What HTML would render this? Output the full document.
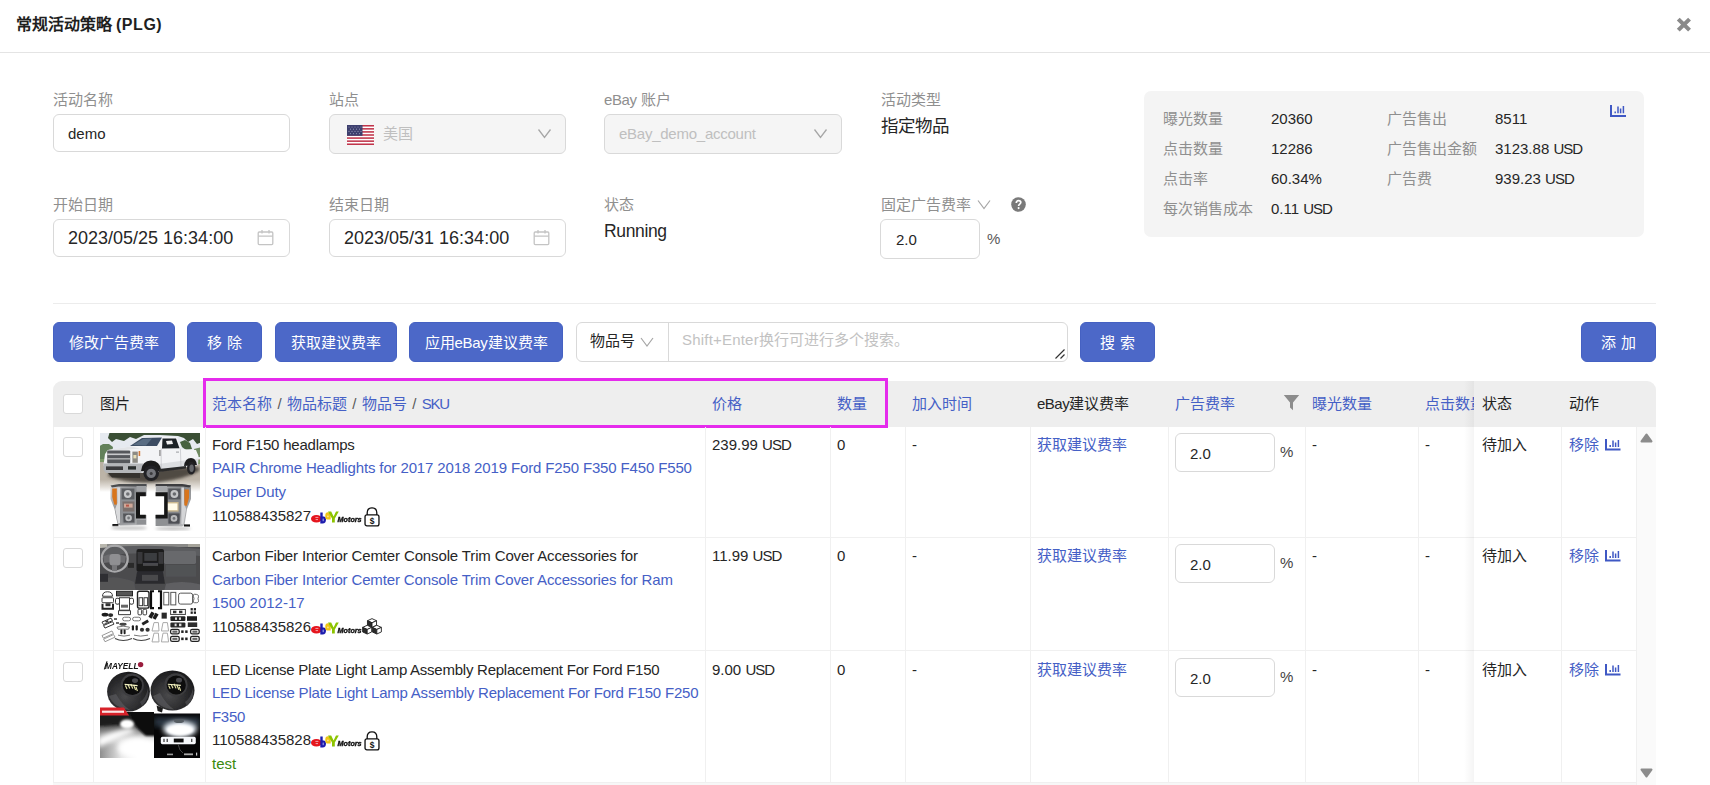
<!DOCTYPE html>
<html lang="zh-CN">
<head>
<meta charset="utf-8">
<title>常规活动策略 (PLG)</title>
<style>
*{box-sizing:border-box;margin:0;padding:0}
html,body{width:1710px;height:785px;overflow:hidden;background:#fff}
body{position:relative;font-family:"Liberation Sans",sans-serif;font-size:15px;line-height:23.57px;color:#262626}
.a{position:absolute;white-space:nowrap}
.lbl{color:#8f8f8f;font-size:15px;line-height:20px;height:20px}
.inp{border:1px solid #d9d9d9;border-radius:6px;background:#fff}
.dis{background:#f5f5f5}
.btn{background:#4c68c8;border:1px solid #4561c2;border-radius:6px;color:#fff;height:40px;top:322px;text-align:center;line-height:40px;font-size:15px}
.vl{width:1px;background:#f0f0f0;top:427px;height:358px}
.hl{height:1px;background:#f0f0f0;left:53px;width:1584px}
.th{top:381px;height:46px;line-height:46px;font-size:15px}
.hb{font-weight:500;color:#1f1f1f}
.blue{color:#4560c6}
.cb{width:20px;height:20px;border:1px solid #d9d9d9;border-radius:3px;background:#fff;left:63px}
.t{font-size:15px;line-height:23.57px;height:23.57px}
.rin{left:1175px;width:100px;height:39px;border:1px solid #d9d9d9;border-radius:6px;background:#fff;padding-left:14px;line-height:39px;font-size:15px}
</style>
</head>
<body>

<!-- modal header -->
<div class="a" id="title" style="left:15.5px;top:13px;height:24px;line-height:24px;font-size:16px;font-weight:bold;color:#1f1f1f">常规活动策略 <span style="letter-spacing:0.55px">(PLG)</span></div>
<svg class="a" style="left:1676.1px;top:16.9px" width="15.8" height="15.4" viewBox="0 0 14 14" preserveAspectRatio="none"><path d="M2 2L12 12M12 2L2 12" stroke="#8a8a8a" stroke-width="3.6" stroke-linecap="butt"/></svg>
<div class="a" style="left:0;top:52px;width:1710px;height:1px;background:#e4e4e4"></div>

<!-- form row 1 -->
<div class="a lbl" style="left:53px;top:90px">活动名称</div>
<div class="a inp" style="left:53px;top:114px;width:237px;height:38px;padding-left:14px;line-height:37px;font-size:15px">demo</div>

<div class="a lbl" style="left:329px;top:90px">站点</div>
<div class="a inp dis" style="left:329px;top:114px;width:237px;height:40px"></div>
<svg class="a" style="left:347px;top:125px" width="27" height="20" viewBox="0 0 27 20">
<rect width="27" height="20" fill="#fff"/>
<g fill="#c0344a"><rect y="0" width="27" height="1.54"/><rect y="3.08" width="27" height="1.54"/><rect y="6.15" width="27" height="1.54"/><rect y="9.23" width="27" height="1.54"/><rect y="12.31" width="27" height="1.54"/><rect y="15.38" width="27" height="1.54"/><rect y="18.46" width="27" height="1.54"/></g>
<rect width="15.5" height="10.8" fill="#3c3f6e"/>
<g fill="#8e90b0"><circle cx="2" cy="2" r=".6"/><circle cx="5" cy="2" r=".6"/><circle cx="8" cy="2" r=".6"/><circle cx="11" cy="2" r=".6"/><circle cx="14" cy="2" r=".6"/><circle cx="3.5" cy="4.2" r=".6"/><circle cx="6.5" cy="4.2" r=".6"/><circle cx="9.5" cy="4.2" r=".6"/><circle cx="12.5" cy="4.2" r=".6"/><circle cx="2" cy="6.4" r=".6"/><circle cx="5" cy="6.4" r=".6"/><circle cx="8" cy="6.4" r=".6"/><circle cx="11" cy="6.4" r=".6"/><circle cx="14" cy="6.4" r=".6"/><circle cx="3.5" cy="8.6" r=".6"/><circle cx="6.5" cy="8.6" r=".6"/><circle cx="9.5" cy="8.6" r=".6"/><circle cx="12.5" cy="8.6" r=".6"/></g>
</svg>
<div class="a" style="left:383px;top:124px;font-size:15px;line-height:20px;color:#bfbfbf">美国</div>
<svg class="a" style="left:537px;top:128px" width="15" height="11" viewBox="0 0 15 11"><path d="M1.5 1.5L7.5 9.5L13.5 1.5" fill="none" stroke="#a6a6a6" stroke-width="1.3"/></svg>

<div class="a lbl" style="left:604px;top:90px"><span style="letter-spacing:-0.4px">eBay</span> 账户</div>
<div class="a inp dis" style="left:604px;top:114px;width:238px;height:40px"></div>
<div class="a" style="left:619px;top:124px;font-size:15px;line-height:20px;color:#bfbfbf" ><span style="letter-spacing:-0.25px">eBay_demo_account</span></div>
<svg class="a" style="left:813px;top:128px" width="15" height="11" viewBox="0 0 15 11"><path d="M1.5 1.5L7.5 9.5L13.5 1.5" fill="none" stroke="#a6a6a6" stroke-width="1.3"/></svg>

<div class="a lbl" style="left:881px;top:90px">活动类型</div>
<div class="a" style="left:881px;top:114px;font-size:17.5px;line-height:25px;color:#262626">指定物品</div>

<!-- form row 2 -->
<div class="a lbl" style="left:53px;top:195px">开始日期</div>
<div class="a inp" style="left:53px;top:219px;width:237px;height:38px;padding-left:14px;line-height:36px;font-size:18px">2023/05/25 16:34:00</div>
<svg class="a cal" style="left:257px;top:229px" width="17" height="17" viewBox="0 0 17 17"><g fill="none" stroke="#c4c4c4" stroke-width="1.3"><rect x="1.2" y="3" width="14.6" height="12.6" rx="1"/><path d="M1.2 7.2H15.8M5 1V4.4M12 1V4.4"/></g></svg>

<div class="a lbl" style="left:329px;top:195px">结束日期</div>
<div class="a inp" style="left:329px;top:219px;width:237px;height:38px;padding-left:14px;line-height:36px;font-size:18px">2023/05/31 16:34:00</div>
<svg class="a cal" style="left:533px;top:229px" width="17" height="17" viewBox="0 0 17 17"><g fill="none" stroke="#c4c4c4" stroke-width="1.3"><rect x="1.2" y="3" width="14.6" height="12.6" rx="1"/><path d="M1.2 7.2H15.8M5 1V4.4M12 1V4.4"/></g></svg>

<div class="a lbl" style="left:604px;top:195px">状态</div>
<div class="a" style="left:604px;top:219px;font-size:17.5px;letter-spacing:-0.35px;line-height:25px;color:#262626">Running</div>

<div class="a lbl" style="left:881px;top:195px">固定广告费率</div>
<svg class="a" style="left:977px;top:199px" width="14" height="11" viewBox="0 0 14 11"><path d="M1 1.5L7 9.5L13 1.5" fill="none" stroke="#a6a6a6" stroke-width="1.2"/></svg>
<svg class="a" style="left:1011px;top:197px" width="15" height="15" viewBox="0 0 15 15"><circle cx="7.5" cy="7.5" r="7.3" fill="#7a7a7a"/><path d="M5.3 5.9C5.3 4.5 6.3 3.7 7.6 3.7C8.9 3.7 9.8 4.5 9.8 5.6C9.8 7.1 7.6 7.2 7.6 8.9" fill="none" stroke="#fff" stroke-width="1.7"/><circle cx="7.6" cy="11.1" r="1.05" fill="#fff"/></svg>
<div class="a inp" style="left:880px;top:219px;width:100px;height:40px;padding-left:15px;line-height:40px;font-size:15px">2.0</div>
<div class="a" style="left:987px;top:229px;font-size:15px;line-height:20px;color:#595959">%</div>

<!-- stats box -->
<div class="a" style="left:1144px;top:91px;width:500px;height:146px;background:#f4f4f4;border-radius:7px"></div>
<div class="a lbl" style="left:1163px;top:109px">曝光数量</div><div class="a t" style="left:1271px;top:107px">20360</div>
<div class="a lbl" style="left:1163px;top:139px">点击数量</div><div class="a t" style="left:1271px;top:137px">12286</div>
<div class="a lbl" style="left:1163px;top:169px">点击率</div><div class="a t" style="left:1271px;top:167px">60.34%</div>
<div class="a lbl" style="left:1163px;top:199px">每次销售成本</div><div class="a t" style="left:1271px;top:197px">0.11 <span style="letter-spacing:-1px">USD</span></div>
<div class="a lbl" style="left:1387px;top:109px">广告售出</div><div class="a t" style="left:1495px;top:107px">8511</div>
<div class="a lbl" style="left:1387px;top:139px">广告售出金额</div><div class="a t" style="left:1495px;top:137px">3123.88 <span style="letter-spacing:-1px">USD</span></div>
<div class="a lbl" style="left:1387px;top:169px">广告费</div><div class="a t" style="left:1495px;top:167px">939.23 <span style="letter-spacing:-1px">USD</span></div>
<svg class="a" style="left:1610px;top:105px" width="16" height="12" viewBox="0 0 16 12"><path d="M1 0V11H16" fill="none" stroke="#3f58c4" stroke-width="2"/><path d="M5.2 6.5V8.2M8 1.6V8.2M10.6 3.6V8.2M13.4 1V8.2" stroke="#3f58c4" stroke-width="1.5" fill="none"/></svg>

<!-- divider -->
<div class="a" style="left:53px;top:303px;width:1603px;height:1px;background:#ececec"></div>

<!-- toolbar -->
<div class="a btn" style="left:53px;width:122px">修改广告费率</div>
<div class="a btn" style="left:187px;width:75px">移 除</div>
<div class="a btn" style="left:275px;width:122px">获取建议费率</div>
<div class="a btn" style="left:409px;width:154px">应用<span style="letter-spacing:-0.3px">eBay</span>建议费率</div>
<div class="a inp" style="left:576px;top:322px;width:492px;height:40px"></div>
<div class="a" style="left:668px;top:323px;width:1px;height:38px;background:#d9d9d9"></div>
<div class="a" style="left:590px;top:331px;font-size:15px;line-height:20px;color:#262626">物品号</div>
<svg class="a" style="left:640px;top:337px" width="14" height="10" viewBox="0 0 14 10"><path d="M1 1L7 9L13 1" fill="none" stroke="#a6a6a6" stroke-width="1.2"/></svg>
<div class="a" style="left:682px;top:330px;font-size:15px;line-height:20px;color:#c2c2c2"><span style="letter-spacing:0.2px">Shift+Enter</span>换行可进行多个搜索。</div>
<svg class="a" style="left:1054px;top:348px" width="12" height="12" viewBox="0 0 12 12"><path d="M1.5 10.5L10.5 1.5M6.5 10.5L10.5 6.5" stroke="#333" stroke-width="1.2" fill="none"/></svg>
<div class="a btn" style="left:1080px;width:75px">搜 索</div>
<div class="a btn" style="left:1581px;width:75px">添 加</div>


<!-- table header -->
<div class="a" style="left:53px;top:381px;width:1603px;height:46px;background:#eeeeee;border-radius:9px 9px 0 0"></div>
<div class="a cb" style="top:394px"></div>
<div class="a th" style="left:100px;font-weight:500;color:#1f1f1f">图片</div>
<div class="a th blue" style="left:212px;word-spacing:1.2px">范本名称 <span style="color:#595959">/</span> 物品标题 <span style="color:#595959">/</span> 物品号 <span style="color:#595959">/</span> <span style="letter-spacing:-1.3px">SKU</span></div>
<div class="a th blue" style="left:712px">价格</div>
<div class="a th blue" style="left:837px">数量</div>
<div class="a th blue" style="left:912px">加入时间</div>
<div class="a th" style="left:1037px;color:#262626"><span style="letter-spacing:-0.5px">eBay</span>建议费率</div>
<div class="a th blue" style="left:1175px">广告费率</div>
<svg class="a" style="left:1283px;top:394px" width="17" height="17" viewBox="0 0 17 17"><path d="M0.8 1H16.2L10 8.4V16.2L7 13.6V8.4Z" fill="#8c8c8c"/></svg>
<div class="a th blue" style="left:1312px">曝光数量</div>
<div class="a th blue" style="left:1425px;width:49px;overflow:hidden">点击数量</div>
<!-- magenta highlight -->
<div class="a" style="left:203px;top:378px;width:685px;height:49.6px;border:3px solid #e52bec"></div>

<!-- grid lines -->
<div class="a vl" style="left:53px;height:355px"></div>
<div class="a vl" style="left:93px;height:355px"></div>
<div class="a vl" style="left:205px;height:355px"></div>
<div class="a vl" style="left:705px;height:355px"></div>
<div class="a vl" style="left:830px;height:355px"></div>
<div class="a vl" style="left:905px;height:355px"></div>
<div class="a vl" style="left:1030px;height:355px"></div>
<div class="a vl" style="left:1168px;height:355px"></div>
<div class="a vl" style="left:1305px;height:355px"></div>
<div class="a vl" style="left:1418px;height:355px"></div>
<div class="a hl" style="top:537px"></div>
<div class="a hl" style="top:650px"></div>
<div class="a hl" style="top:782px"></div>
<!-- row 1 -->
<div class="a cb" style="top:437px"></div>
<!--IMG1S--><svg class="a" style="left:100px;top:433px" width="100" height="98" viewBox="0 0 100 98">
<defs>
<filter id="b1" x="-5%" y="-5%" width="110%" height="110%"><feGaussianBlur stdDeviation="0.55"/></filter>
<filter id="b1b" x="-20%" y="-20%" width="140%" height="140%"><feGaussianBlur stdDeviation="1.6"/></filter>
<linearGradient id="rd1" x1="0" y1="0" x2="0" y2="1"><stop offset="0" stop-color="#b9b0a2"/><stop offset="0.62" stop-color="#bdb5a9"/><stop offset="0.85" stop-color="#e4e0da"/><stop offset="1" stop-color="#ffffff"/></linearGradient>
<linearGradient id="ch1" x1="0" y1="0" x2="1" y2="1"><stop offset="0" stop-color="#dcdcde"/><stop offset="0.45" stop-color="#85878a"/><stop offset="1" stop-color="#c2c3c5"/></linearGradient>
<clipPath id="c1"><rect width="100" height="98"/></clipPath>
</defs>
<g clip-path="url(#c1)">
<rect width="100" height="98" fill="#fff"/>
<g filter="url(#b1)">
<rect x="-2" y="-2" width="104" height="34" fill="#e6eaf0"/>
<rect x="-2" y="26" width="104" height="33" fill="url(#rd1)"/>
<path d="M10 -2H102V9L97 11L93 6L88 9L84 5L78 3L60 2L44 2L36 6L30 4L24 8L16 6L12 9L8 5Z" fill="#3a5034"/>
<path d="M-2 14L3 11L9 11L13 14L12 20L6 26L-2 27Z" fill="#62805a"/>
<path d="M80 9L85 7L90 10L92 16L86 17L82 14Z" fill="#47633f"/>
<path d="M94 16L102 14V24L95 24Z" fill="#6f8a62"/>
<rect x="-2" y="26" width="12" height="3" fill="#7d9a6a"/>
<rect x="93" y="27" width="9" height="4" fill="#7d9a6a"/>
</g>
<path d="M8 43Q30 52 60 49Q85 46 99 38L99 34L10 37Z" fill="#3d3831" opacity=".85" filter="url(#b1b)"/>
<g filter="url(#b1)">
<path d="M5 21L8 17L31 13.5L42 4.5L62 3.2L77 4L81 16L96 17L98.5 23L98 32L86 34L62 38L42 40L6 39L3.5 32Z" fill="#f3f4f6"/><path d="M42 33L62 30.5L84 27.5L98 25.5L98 32L86 34L62 38L42 40Z" fill="#dcdee1"/><path d="M31 13.5L8 17L6 19.5L30 16.5L40 15.5Z" fill="#e2e4e7"/><path d="M61.2 15.6V37M80.4 15.6L81 34" stroke="#b9bbbf" stroke-width=".6" fill="none"/><rect x="76" y="18.6" width="3" height="1" fill="#9a9ca0"/>
<path d="M30 13L42 5L62 4.4L57 13Z" fill="#3c4e63"/>
<path d="M33 12L43 6L52 5.6L46 12.4Z" fill="#6e8299" opacity=".6"/>
<path d="M62.5 5.4L76 5.4L79.5 15.2L62 15.4Z" fill="#1f2227"/>
<path d="M66 8L72 7.5L73 11L67 11.6Z" fill="#f0f0f0"/>
<rect x="7.2" y="17.6" width="23" height="13" rx="1" fill="#56585c"/>
<rect x="7.2" y="20.5" width="23" height="1.6" fill="#c9cacc"/>
<rect x="7.2" y="25" width="23" height="1.6" fill="#a8a9ab"/>
<rect x="32.4" y="18.6" width="5.4" height="11.2" fill="#8d8b84"/>
<rect x="33.4" y="22" width="3" height="3.4" fill="#e8dfb8"/>
<rect x="38.6" y="18" width="1.6" height="5" fill="#d27a3a"/>
<path d="M3.5 30.6H43V38.5L41 40H6L3.5 37Z" fill="#b4b6b9"/>
<rect x="6" y="33.4" width="17" height="3.6" fill="#3a3b3d"/>
<rect x="28" y="33.2" width="8" height="3.4" fill="#2c2d2f"/>
<path d="M8 40H40V45L12 44.5Z" fill="#35332f"/>
<path d="M41 38Q42 27.5 51 27.5Q60 27.5 61.5 38Z" fill="#1d1d1f"/>
<circle cx="51.2" cy="40.2" r="7.8" fill="#232325"/>
<circle cx="51.2" cy="40.4" r="4.7" fill="#74767b"/>
<circle cx="51.2" cy="40.4" r="1.5" fill="#3a3a3c"/>
<path d="M84 33Q85 25 91 25Q96 25 97 32Z" fill="#1d1d1f"/>
<ellipse cx="91.2" cy="35.2" rx="4.2" ry="6.4" fill="#232325"/>
<ellipse cx="91.6" cy="35.2" rx="2.2" ry="3.7" fill="#66686c"/>
<path d="M59 36L86 33V35.5L59 39Z" fill="#2a2a2c"/>
<rect x="59.6" y="17" width=".7" height="6" fill="#333"/>
</g>
<!-- left headlight -->
<g filter="url(#b1)">
<path d="M10.5 52.5L19 51L46.5 51L46.5 92L20 92.6L17.5 91L14.5 76L10.5 66Z" fill="url(#ch1)"/>
<path d="M10.5 52.5L19 51L46.5 51V53.4H18.4L12 54.6Z" fill="#4c4d50"/><path d="M20.5 54.4H35.4V90.4H22.5L20 76Z" fill="#8d8f93"/><path d="M21.6 55.6H34.4V66.4H21.6Z" fill="#5d5f63"/><circle cx="27.8" cy="61" r="3.9" fill="#c9cacc"/><circle cx="27.8" cy="61" r="1.8" fill="#6f7175"/><path d="M22.4 68.4H34.4V78.6H23Z" fill="#7a6f6d"/><rect x="24" y="70.6" width="8.6" height="4" fill="#cfa898"/><rect x="26" y="71.6" width="3" height="2" fill="#b5574a"/><path d="M23 80.4H34.4V89.6H23.6Z" fill="#54565a"/><circle cx="28.6" cy="85" r="3.3" fill="#bfc0c2"/><circle cx="28.6" cy="85" r="1.4" fill="#77797d"/><path d="M17.4 54.6L20 54.4V90L18 90.6L15.2 76L17.4 70Z" fill="#d9dadc"/><path d="M12.2 55.4H16.8V71.6L14.4 71.8L12.2 64Z" fill="#d8741f"/>
<rect x="39.6" y="63" width="8" height="19" fill="#fff"/><path d="M36 59.2H45.8V63.2H40V81.8H45.8V85.6H36Z" fill="#141416"/>
<path d="M36.5 53H46V58.4H36.5Z" fill="#9fa1a4"/>
<path d="M36.5 86.6H46V91.4H36.5Z" fill="#8e9093"/>
<rect x="12.4" y="91" width="6" height="2.2" fill="#151515"/>
</g>
<!-- right headlight -->
<g filter="url(#b1)">
<path d="M91 52.5L82 51L55.6 51L55.6 93L82 93.6L84.5 92L87 76L91 66Z" fill="url(#ch1)"/>
<path d="M91 52.5L82 51L55.6 51V53.4H83L89.4 54.6Z" fill="#3c3d40"/><path d="M81 54.4H67.4V91.4H79L81.5 76Z" fill="#85878b"/><path d="M68.4 55.6H80.4V66.4H68.4Z" fill="#55575b"/><circle cx="74.4" cy="61" r="3.9" fill="#c4c5c7"/><circle cx="74.4" cy="61" r="1.8" fill="#686a6e"/><path d="M68.4 80.4H79.6V90.6H68.4Z" fill="#4e5054"/><circle cx="74" cy="85.4" r="3.3" fill="#b9babc"/><circle cx="74" cy="85.4" r="1.4" fill="#707276"/><rect x="65.6" y="69" width="13" height="9.6" fill="#cbb88f"/><rect x="67" y="70.4" width="10.4" height="6.8" fill="#fffbea"/><path d="M84 54.6L81.4 54.4V91L83.4 91.6L86.2 76L84 70Z" fill="#d4d5d7"/><path d="M89 56.6H84.4V72.6L86.8 72.8L89 65Z" fill="#d8741f"/>
<rect x="54" y="63" width="10.4" height="19" fill="#fff"/><path d="M67.7 59.2H55.6V63.2H64.2V81.8H55.6V85.6H67.7Z" fill="#141416"/>
<path d="M67 53H56V58.4H67Z" fill="#a6a8ab"/>
<path d="M67 86.6H56V92H67Z" fill="#8e9093"/>
<rect x="84" y="91.4" width="6" height="2.2" fill="#151515"/>
</g>
<ellipse cx="29" cy="95" rx="18" ry="1.6" fill="#bbb" filter="url(#b1b)"/>
<ellipse cx="73" cy="95.6" rx="18" ry="1.6" fill="#bbb" filter="url(#b1b)"/>
</g>
</svg><!--IMG1E-->
<div class="a t" style="left:212px;top:433px;letter-spacing:-0.22px">Ford F150 headlamps</div>
<div class="a t blue" style="left:212px;top:456px;letter-spacing:-0.142px">PAIR Chrome Headlights for 2017 2018 2019 Ford F250 F350 F450 F550</div>
<div class="a t blue" style="left:212px;top:480px;letter-spacing:-0.11px">Super Duty</div>
<div class="a t" style="left:212px;top:504px">110588435827</div>
<!--IC1S--><svg class="a" style="left:311px;top:510.5px" width="52" height="13" viewBox="0 0 52 13"><defs><filter id="lb" x="-5%" y="-10%" width="110%" height="120%"><feGaussianBlur stdDeviation="0.3"/></filter></defs><g filter="url(#lb)"><ellipse cx="5.4" cy="7.7" rx="5.4" ry="3.8" fill="#e5131e"/><path d="M4.4 6.4H7.4M4.6 8.6H7" stroke="#f6b6b9" stroke-width=".9"/><path d="M9.3 1.6H11.7V5.6Q15 5 15 8.6Q15 12.6 11.6 12.6H9.3Z" fill="#1c1cae"/><rect x="11.6" y="7.6" width="1.2" height="2.6" fill="#9b9be0"/><path d="M14.3 4.4Q14.3 1.2 17 1.2Q19.7 1.2 19.7 4V8.6H17.2Q14.3 8.6 14.3 6Z" fill="#f0c416"/><rect x="16.2" y="4.6" width="1.4" height="1.6" fill="#fbe9a0"/><path d="M17 .4H20.2L22.6 5.4L25 .4H27.8L23.8 7.6V11.4H21V7.6Z" fill="#8cc400"/><text x="26.6" y="11.3" font-family="Liberation Sans, sans-serif" font-weight="bold" font-style="italic" font-size="6.6" textLength="24" lengthAdjust="spacingAndGlyphs" fill="#111" stroke="#111" stroke-width=".35">Motors</text></g></svg><svg class="a" style="left:364px;top:507.2px" width="16" height="19.8" viewBox="0 0 17 21" preserveAspectRatio="none"><path d="M3.4 8.4V6.2Q3.4 1 8.5 1Q13.6 1 13.6 6.2V8.4" fill="none" stroke="#111" stroke-width="1.4"/><rect x="1.1" y="8.4" width="14.8" height="11.6" rx="2" fill="#fff" stroke="#111" stroke-width="1.4"/><text x="8.5" y="17.6" text-anchor="middle" font-family="Liberation Sans, sans-serif" font-weight="bold" font-size="9" fill="#111">$</text></svg><!--IC1E-->
<div class="a t" style="left:712px;top:433px">239.99 <span style="letter-spacing:-1px">USD</span></div>
<div class="a t" style="left:837px;top:433px">0</div>
<div class="a t" style="left:912px;top:433px">-</div>
<div class="a t blue" style="left:1037px;top:433px">获取建议费率</div>
<div class="a rin" style="top:433px">2.0</div>
<div class="a t" style="left:1280px;top:440px;color:#434343">%</div>
<div class="a t" style="left:1312px;top:433px">-</div>
<div class="a t" style="left:1425px;top:433px">-</div>
<!-- row 2 -->
<div class="a cb" style="top:548px"></div>
<!--IMG2S--><svg class="a" style="left:100px;top:544px" width="100" height="99.5" viewBox="0 0 100 100" preserveAspectRatio="none">
<defs>
<filter id="b2" x="-5%" y="-5%" width="110%" height="110%"><feGaussianBlur stdDeviation="0.6"/></filter>
<filter id="b2s" x="-5%" y="-5%" width="110%" height="110%"><feGaussianBlur stdDeviation="0.35"/></filter>
<clipPath id="c2"><rect width="100" height="46.2"/></clipPath>
</defs>
<rect width="100" height="100" fill="#fff"/>
<g clip-path="url(#c2)"><g filter="url(#b2)">
<rect x="-2" y="-2" width="104" height="50" fill="#4b4b4e"/>
<rect x="-2" y="-2" width="104" height="5" fill="#8a8a88"/>
<rect x="-2" y="-2" width="9" height="7" fill="#b9b7ae"/>
<rect x="88" y="-2" width="14" height="5" fill="#a5a39a"/>
<path d="M0 4Q50 -1 100 5V12Q50 6 0 12Z" fill="#5c5d60"/>
<rect x="64" y="7" width="32" height="13" rx="1.5" fill="#68696c"/>
<rect x="66" y="21" width="30" height="12" fill="#515255"/>
<rect x="36.5" y="5" width="27.5" height="23" rx="2" fill="#1b1b1d"/>
<rect x="44.3" y="9" width="12.6" height="8" fill="#3b3c3f"/>
<rect x="43" y="19" width="15" height="3" fill="#4a4a4d"/>
<rect x="37.5" y="8" width="5" height="12" fill="#38383a"/>
<rect x="58.5" y="8" width="5" height="12" fill="#38383a"/>
<path d="M37 28H63L65 40H35Z" fill="#2b2b2d"/>
<rect x="42" y="31" width="16" height="6" fill="#4a4a4c"/>
<path d="M-2 36Q14 30 34 38L36 48H-2Z" fill="#545457"/>
<path d="M66 40Q84 36 102 41V48H64Z" fill="#5f5f62"/>
<rect x="-2" y="30" width="10" height="8" fill="#2d2d30"/>
<circle cx="14.7" cy="14.7" r="13" fill="none" stroke="#a9a9ab" stroke-width="2.3"/>
<path d="M3 12Q14 8 26 12L25 19Q15 17 4 19Z" fill="#6d6d70"/>
<rect x="9.5" y="10" width="11" height="11.5" rx="3" fill="#8f8f92"/>
<rect x="12" y="21" width="5" height="6" fill="#77777a"/>
<rect x="28" y="19" width="6" height="5" fill="#2a2a2c"/>
</g></g>
<g filter="url(#b2s)" fill="none" stroke="#3a3a3a" stroke-width="1">
<path d="M2.5 52.5Q2.5 48 7.5 48Q12.5 48 12.5 52.5Z"/>
<rect x="2" y="54" width="11.5" height="5" rx="1"/>
<path d="M2.5 60V65H13V60" stroke-width="2" stroke="#222"/>
<rect x="5.5" y="59.5" width="5" height="3" fill="#333" stroke="none"/>
<rect x="16.5" y="47.5" width="16" height="4.6" fill="#555" stroke="#222"/>
<rect x="15.5" y="54.5" width="4" height="6" rx="1.5"/><rect x="29.5" y="54.5" width="4" height="6" rx="1.5"/>
<rect x="19.5" y="54" width="10" height="12.5"/><rect x="21" y="61" width="7" height="3" fill="#666" stroke="none"/>
<path d="M18.5 67H30.5V71H18.5Z"/>
<rect x="37.5" y="47.5" width="11.5" height="17" rx="2" stroke="#222" stroke-width="1.4"/>
<rect x="39" y="54" width="3.6" height="8" /><rect x="44" y="54" width="3.6" height="8"/>
<path d="M54 47.5H51V64.5H54" stroke="#111" stroke-width="2.2"/>
<path d="M58 47.5H61V64.5H58" stroke="#111" stroke-width="2.2"/>
<rect x="63.8" y="48.6" width="5" height="12.6" stroke="#555"/>
<rect x="70.8" y="48.6" width="5" height="12.6" stroke="#555"/>
<rect x="78.6" y="49.4" width="14" height="11" rx="2" stroke="#555"/>
<path d="M94.5 50.5Q99 50.5 98.5 53Q97.5 55 98.5 57Q99 59.4 94.5 59Q92.5 59 93.5 57Q94.5 55 93.5 53Q92.5 50.5 94.5 50.5Z" stroke="#666"/>
<ellipse cx="5" cy="71" rx="3.4" ry="1.8" fill="#1a1a1a" stroke="none"/><ellipse cx="10.6" cy="71.4" rx="2.6" ry="1.9" fill="#2a2a2a" stroke="none"/>
<rect x="38" y="65.6" width="3.6" height="5.6" rx="1"/><rect x="43" y="65.6" width="3.6" height="5.6" rx="1"/>
<path d="M51.5 67.8L54.6 69.6L51.5 75L48.4 73.2Z" fill="#1a1a1a" stroke="none"/><path d="M55.5 69L58.6 70.8L55.5 76.2L52.4 74.4Z" fill="#1a1a1a" stroke="none"/>
<rect x="61.6" y="69" width="5.2" height="6" fill="#2a2a2a" stroke="none"/>
<rect x="70.6" y="65.8" width="14.8" height="5" stroke="#444"/><rect x="73" y="67" width="3.4" height="2.6" fill="#333" stroke="none"/><rect x="79" y="67" width="3.4" height="2.6" fill="#333" stroke="none"/>
<g fill="#222" stroke="none"><rect x="90.6" y="64.4" width="2.2" height="2.4"/><rect x="93.8" y="64.4" width="2.2" height="2.4"/><rect x="90.6" y="67.8" width="2.2" height="2.4"/><rect x="93.8" y="67.8" width="2.2" height="2.4"/></g>
<rect x="70.4" y="72.6" width="15" height="4.8" rx="1" fill="#232323" stroke="none"/><rect x="75" y="73.8" width="2" height="2.4" fill="#ddd" stroke="none"/><rect x="79" y="73.8" width="2" height="2.4" fill="#ddd" stroke="none"/>
<rect x="87" y="72.6" width="10" height="4.6" fill="#1d1d1d" stroke="none"/>
<rect x="70.4" y="78.8" width="15" height="5.2" rx="1" fill="#2b2b2b" stroke="none"/><rect x="74.6" y="80" width="2" height="2.6" fill="#ddd" stroke="none"/><rect x="79" y="80" width="2.4" height="2.6" fill="#ddd" stroke="none"/>
<rect x="87.8" y="78.8" width="9.4" height="4.6" fill="#2d2d2d" stroke="none"/>
<path d="M2 78.5L11 74.5L12.5 77L3.5 81Z" stroke="#333"/><path d="M3.5 82L12.5 78L14 80.5L5 84.5Z" stroke="#333"/>
<rect x="5.5" y="77" width="3" height="1.6" fill="#333" stroke="none" transform="rotate(-24 7 78)"/>
<rect x="14" y="74.6" width="3" height="1.6" fill="#444" stroke="none"/><rect x="16" y="78.6" width="3" height="1.6" fill="#444" stroke="none"/>
<rect x="22.6" y="73.6" width="8" height="3.6" rx="1.8" stroke="#777"/><rect x="32.6" y="73.6" width="8" height="3.6" rx="1.8" stroke="#777"/>
<path d="M41.5 79.5L47.5 76L49 78.4L43 82Z" fill="#222" stroke="none"/>
<ellipse cx="23" cy="80.6" rx="3.6" ry="1.5" fill="#444" stroke="none"/>
<path d="M17 83.6Q23 81.6 29.5 83.6L28.5 85.6H18Z" stroke="#777"/>
<rect x="20.4" y="86" width="2" height="4.6" rx="1" fill="#222" stroke="none"/><rect x="23.6" y="86" width="2" height="4.6" rx="1" fill="#222" stroke="none"/>
<rect x="31.8" y="81.6" width="2.2" height="5.4" rx="1" fill="#1d1d1d" stroke="none"/><rect x="35.6" y="81.6" width="2.2" height="5.4" rx="1" fill="#1d1d1d" stroke="none"/>
<circle cx="42" cy="86.2" r="2.1" fill="#333" stroke="none"/><circle cx="47.6" cy="86.2" r="2.1" fill="#333" stroke="none"/>
<path d="M54 79H58.4L59 87.4H52Z" stroke="#aaa"/><path d="M63 79H67.4L68.6 87.4H61.4Z" stroke="#aaa"/>
<path d="M54 89.6H58.4L59 98.4H52Z" stroke="#aaa"/><path d="M63 89.6H67.4L68.6 98.4H61.4Z" stroke="#aaa"/>
<path d="M2 92L12 87.4L13.4 90L3.4 94.6Z" stroke="#999"/><path d="M3.6 95.6L13.6 91L15 93.6L5 98.2Z" stroke="#999"/>
<path d="M15 95Q23 99 32 95" stroke="#444" stroke-width="1.2"/><path d="M18 91.6Q24 93.6 30 91.6" stroke="#777"/>
<path d="M33 95Q41 99 50 95" stroke="#444" stroke-width="1.2"/><path d="M34 91.6Q40 93.6 48 91.6" stroke="#777"/>
<rect x="70.6" y="85.8" width="8.6" height="4.6" rx="1.6" stroke="#222" stroke-width="1.3"/><rect x="72.4" y="87" width="5" height="2.2" fill="#666" stroke="none"/>
<rect x="81.2" y="86.8" width="2.4" height="2.6" fill="#222" stroke="none"/><rect x="85.2" y="86.8" width="2.4" height="2.6" fill="#222" stroke="none"/>
<rect x="90.6" y="85.8" width="8.6" height="4.6" rx="1.6" stroke="#222" stroke-width="1.3"/><rect x="92.4" y="87" width="5" height="2.2" fill="#666" stroke="none"/>
<rect x="70.6" y="92.8" width="8.6" height="5" rx="1.6" stroke="#222" stroke-width="1.3"/><rect x="72.4" y="94.2" width="5" height="2.2" fill="#666" stroke="none"/>
<rect x="81.2" y="94" width="2.4" height="2.6" fill="#222" stroke="none"/><rect x="85.2" y="94" width="2.4" height="2.6" fill="#222" stroke="none"/>
<rect x="90.6" y="92.8" width="8.6" height="5" rx="1.6" stroke="#222" stroke-width="1.3"/><rect x="92.4" y="94.2" width="5" height="2.2" fill="#666" stroke="none"/>
</g>
</svg><!--IMG2E-->
<div class="a t" style="left:212px;top:544px;letter-spacing:-0.136px">Carbon Fiber Interior Cemter Console Trim Cover Accessories for</div>
<div class="a t blue" style="left:212px;top:568px;letter-spacing:-0.14px">Carbon Fiber Interior Cemter Console Trim Cover Accessories for Ram</div>
<div class="a t blue" style="left:212px;top:591px">1500 2012-17</div>
<div class="a t" style="left:212px;top:615px">110588435826</div>
<!--IC2S--><svg class="a" style="left:311px;top:621.5px" width="52" height="13" viewBox="0 0 52 13"><defs><filter id="lb" x="-5%" y="-10%" width="110%" height="120%"><feGaussianBlur stdDeviation="0.3"/></filter></defs><g filter="url(#lb)"><ellipse cx="5.4" cy="7.7" rx="5.4" ry="3.8" fill="#e5131e"/><path d="M4.4 6.4H7.4M4.6 8.6H7" stroke="#f6b6b9" stroke-width=".9"/><path d="M9.3 1.6H11.7V5.6Q15 5 15 8.6Q15 12.6 11.6 12.6H9.3Z" fill="#1c1cae"/><rect x="11.6" y="7.6" width="1.2" height="2.6" fill="#9b9be0"/><path d="M14.3 4.4Q14.3 1.2 17 1.2Q19.7 1.2 19.7 4V8.6H17.2Q14.3 8.6 14.3 6Z" fill="#f0c416"/><rect x="16.2" y="4.6" width="1.4" height="1.6" fill="#fbe9a0"/><path d="M17 .4H20.2L22.6 5.4L25 .4H27.8L23.8 7.6V11.4H21V7.6Z" fill="#8cc400"/><text x="26.6" y="11.3" font-family="Liberation Sans, sans-serif" font-weight="bold" font-style="italic" font-size="6.6" textLength="24" lengthAdjust="spacingAndGlyphs" fill="#111" stroke="#111" stroke-width=".35">Motors</text></g></svg><svg class="a" style="left:362px;top:617.5px" width="20" height="17.3" preserveAspectRatio="none" viewBox="0 0 22 19"><path d="M11 0.7L16 3.0L11 5.3L6 3.0Z" fill="#fff" stroke="#222" stroke-width="1" stroke-linejoin="round"/><path d="M6 3.0L11 5.3V10.299999999999999L6 8.0Z" fill="#2a2a2a" stroke="#222" stroke-width="1" stroke-linejoin="round"/><path d="M11 5.3L16 3.0V8.0L11 10.299999999999999Z" fill="#fff" stroke="#222" stroke-width="1" stroke-linejoin="round"/><path d="M5.7 8L10.7 10.3L5.7 12.6L0.7000000000000002 10.3Z" fill="#fff" stroke="#222" stroke-width="1" stroke-linejoin="round"/><path d="M0.7000000000000002 10.3L5.7 12.6V17.6L0.7000000000000002 15.3Z" fill="#2a2a2a" stroke="#222" stroke-width="1" stroke-linejoin="round"/><path d="M5.7 12.6L10.7 10.3V15.3L5.7 17.6Z" fill="#fff" stroke="#222" stroke-width="1" stroke-linejoin="round"/><path d="M16.3 8L21.3 10.3L16.3 12.6L11.3 10.3Z" fill="#fff" stroke="#222" stroke-width="1" stroke-linejoin="round"/><path d="M11.3 10.3L16.3 12.6V17.6L11.3 15.3Z" fill="#2a2a2a" stroke="#222" stroke-width="1" stroke-linejoin="round"/><path d="M16.3 12.6L21.3 10.3V15.3L16.3 17.6Z" fill="#fff" stroke="#222" stroke-width="1" stroke-linejoin="round"/></svg><!--IC2E-->
<div class="a t" style="left:712px;top:544px">11.99 <span style="letter-spacing:-1px">USD</span></div>
<div class="a t" style="left:837px;top:544px">0</div>
<div class="a t" style="left:912px;top:544px">-</div>
<div class="a t blue" style="left:1037px;top:544px">获取建议费率</div>
<div class="a rin" style="top:544px">2.0</div>
<div class="a t" style="left:1280px;top:551px;color:#434343">%</div>
<div class="a t" style="left:1312px;top:544px">-</div>
<div class="a t" style="left:1425px;top:544px">-</div>
<!-- row 3 -->
<div class="a cb" style="top:662px"></div>
<!--IMG3S--><svg class="a" style="left:100px;top:658px" width="100" height="100" viewBox="0 0 100 100">
<defs>
<filter id="b3" x="-5%" y="-5%" width="110%" height="110%"><feGaussianBlur stdDeviation="0.55"/></filter>
<filter id="b3b" x="-30%" y="-30%" width="160%" height="160%"><feGaussianBlur stdDeviation="2.6"/></filter>
<filter id="b3c" x="-30%" y="-30%" width="160%" height="160%"><feGaussianBlur stdDeviation="1.2"/></filter>
<radialGradient id="lp3" cx="0.42" cy="0.62" r="0.7"><stop offset="0" stop-color="#4a4a4c"/><stop offset="0.55" stop-color="#2c2c2e"/><stop offset="1" stop-color="#171718"/></radialGradient>
<linearGradient id="lg3" x1="0" y1="0" x2="1" y2="0"><stop offset="0" stop-color="#8e8e8e"/><stop offset="0.4" stop-color="#e6e6e6"/><stop offset="0.7" stop-color="#ffffff"/><stop offset="1" stop-color="#ffffff"/></linearGradient>
<linearGradient id="lv3" x1="0" y1="0" x2="0" y2="1"><stop offset="0" stop-color="#0c0c0c"/><stop offset="0.3" stop-color="#2e2e2e"/><stop offset="0.6" stop-color="#9a9a9a" stop-opacity=".8"/><stop offset="0.9" stop-color="#e8e8e8" stop-opacity="0"/></linearGradient>
<clipPath id="c3"><rect width="100" height="100"/></clipPath>
<clipPath id="c3l"><rect x="0" y="54" width="54" height="46"/></clipPath>
<clipPath id="c3r"><rect x="54" y="55.4" width="46" height="44.6"/></clipPath>
</defs>
<g clip-path="url(#c3)">
<rect width="100" height="100" fill="#fff"/>
<!-- lamps -->
<g filter="url(#b3)">
<ellipse cx="28.5" cy="33.6" rx="21.4" ry="19.8" fill="url(#lp3)"/>
<ellipse cx="72.5" cy="32.6" rx="22" ry="20" fill="url(#lp3)"/>
<path d="M56.6 47.6L63 50L62 54.4L57.6 53Z" fill="#1d1d1e"/><path d="M9 38Q14 50 30 52Q22 47 16 36Z" fill="#5a5a5c" opacity=".7"/><path d="M53 38Q58 50 74 51.6Q66 46 60 35Z" fill="#5a5a5c" opacity=".7"/><path d="M40 44Q46 40 48 30Q50 40 42 48Z" fill="#4a4a4c" opacity=".8"/><path d="M85 44Q91 40 93 30Q95 40 87 48Z" fill="#4a4a4c" opacity=".8"/>
<circle cx="32.2" cy="27.2" r="11.6" fill="#3d3d3f"/><circle cx="32.4" cy="27.4" r="9.6" fill="#0c0c0d"/>
<circle cx="76" cy="26.8" r="11.6" fill="#3d3d3f"/><circle cx="76.2" cy="27" r="9.6" fill="#0c0c0d"/>
<ellipse cx="35" cy="22.6" rx="3" ry="2.4" fill="#4a4a4e"/><ellipse cx="79" cy="22.2" rx="3" ry="2.4" fill="#4a4a4e"/>
<g stroke="#e8e6a8" stroke-width="1.1" fill="none"><path d="M25.4 27.6L27 31M28 26.6L29.8 30.4M30.8 26L32.8 30.6M33.6 27L35.6 32M36 29L37.4 33"/><path d="M68.6 27.4L70.2 30.8M71.2 26.4L73 30.2M74 25.8L76 30.4M76.8 26.8L78.8 31.8M79.2 28.8L80.6 32.8"/></g>
<path d="M24.6 26.4L37.6 27.6" stroke="#f4f3c4" stroke-width="1.1"/><path d="M67.8 26.2L80.8 27.4" stroke="#f4f3c4" stroke-width="1.1"/>
</g>
<!-- logo -->
<g filter="url(#b3)"><text x="5" y="11" font-family="Liberation Sans, sans-serif" font-weight="bold" font-style="italic" font-size="9.4" textLength="33.5" lengthAdjust="spacingAndGlyphs" fill="#141414">MAYELL</text><circle cx="40.6" cy="6.6" r="2.7" fill="#9a1b3c"/><path d="M4.4 11.4L7 3.4" stroke="#141414" stroke-width="1.2"/></g>
<!-- bottom-left -->
<g clip-path="url(#c3l)">
<rect x="0" y="54" width="54" height="46" fill="url(#lg3)"/>
<rect x="-2" y="54" width="58" height="36" fill="url(#lv3)"/>
<path d="M29 52L56 52L56 78L45.6 78L37.4 70.6L30.6 60.6Z" fill="#0e0e0f" filter="url(#b3c)"/>
<path d="M-2 56H30L32 64L24 66L-2 68Z" fill="#1a1a1a" filter="url(#b3c)"/>
<ellipse cx="27" cy="66" rx="7" ry="4.6" fill="#fff" filter="url(#b3c)"/>
<path d="M-2 80Q14 73 30 70L36 74Q16 80 -2 90Z" fill="#fff" filter="url(#b3b)"/>
<ellipse cx="36" cy="90" rx="18" ry="10" fill="#fff" filter="url(#b3b)"/>
</g>
<!-- banner -->
<path d="M0 49.4H24L29 57.6H0Z" fill="#d8242c" filter="url(#b3)"/>
<rect x="2" y="52.6" width="22" height="2.2" fill="#fbe4e4" filter="url(#b3)"/>
<!-- bottom-right -->
<g clip-path="url(#c3r)">
<rect x="54" y="55" width="46" height="45" fill="#050506"/>
<rect x="54" y="59" width="46" height="10" fill="#27303c" filter="url(#b3b)"/>
<ellipse cx="80" cy="71" rx="17" ry="8" fill="#e9f0f8" filter="url(#b3b)"/>
<ellipse cx="80" cy="72" rx="13" ry="5.4" fill="#fff" filter="url(#b3c)"/>
<ellipse cx="79" cy="63" rx="5" ry="2" fill="#555b62" filter="url(#b3)"/>
<rect x="60.8" y="78.8" width="35" height="7.4" rx="1.6" fill="#f6f8fb" filter="url(#b3)"/>
<rect x="73.8" y="80.6" width="9.8" height="3.8" fill="#111" filter="url(#b3)"/>
<rect x="63.4" y="80.8" width="1.2" height="3.2" fill="#333"/><rect x="66.6" y="80.8" width="1.2" height="3.2" fill="#333"/><rect x="91" y="80.8" width="1.4" height="3.2" fill="#555"/>
<rect x="67" y="95.6" width="6" height="1.6" fill="#999" filter="url(#b3)"/><rect x="84" y="95.4" width="9" height="1.8" fill="#aaa" filter="url(#b3)"/><rect x="96" y="94.6" width="1.2" height="3" fill="#ccc"/>
<path d="M78 86L80 92L83 95" stroke="#555" stroke-width=".8" fill="none"/>
</g>
</g>
</svg><!--IMG3E-->
<div class="a t" style="left:212px;top:658px;letter-spacing:-0.243px">LED License Plate Light Lamp Assembly Replacement For Ford F150</div>
<div class="a t blue" style="left:212px;top:681px;letter-spacing:-0.218px">LED License Plate Light Lamp Assembly Replacement For Ford F150 F250</div>
<div class="a t blue" style="left:212px;top:705px;letter-spacing:-0.3px">F350</div>
<div class="a t" style="left:212px;top:728px">110588435828</div>
<!--IC3S--><svg class="a" style="left:311px;top:734.5px" width="52" height="13" viewBox="0 0 52 13"><defs><filter id="lb" x="-5%" y="-10%" width="110%" height="120%"><feGaussianBlur stdDeviation="0.3"/></filter></defs><g filter="url(#lb)"><ellipse cx="5.4" cy="7.7" rx="5.4" ry="3.8" fill="#e5131e"/><path d="M4.4 6.4H7.4M4.6 8.6H7" stroke="#f6b6b9" stroke-width=".9"/><path d="M9.3 1.6H11.7V5.6Q15 5 15 8.6Q15 12.6 11.6 12.6H9.3Z" fill="#1c1cae"/><rect x="11.6" y="7.6" width="1.2" height="2.6" fill="#9b9be0"/><path d="M14.3 4.4Q14.3 1.2 17 1.2Q19.7 1.2 19.7 4V8.6H17.2Q14.3 8.6 14.3 6Z" fill="#f0c416"/><rect x="16.2" y="4.6" width="1.4" height="1.6" fill="#fbe9a0"/><path d="M17 .4H20.2L22.6 5.4L25 .4H27.8L23.8 7.6V11.4H21V7.6Z" fill="#8cc400"/><text x="26.6" y="11.3" font-family="Liberation Sans, sans-serif" font-weight="bold" font-style="italic" font-size="6.6" textLength="24" lengthAdjust="spacingAndGlyphs" fill="#111" stroke="#111" stroke-width=".35">Motors</text></g></svg><svg class="a" style="left:364px;top:731.2px" width="16" height="19.8" viewBox="0 0 17 21" preserveAspectRatio="none"><path d="M3.4 8.4V6.2Q3.4 1 8.5 1Q13.6 1 13.6 6.2V8.4" fill="none" stroke="#111" stroke-width="1.4"/><rect x="1.1" y="8.4" width="14.8" height="11.6" rx="2" fill="#fff" stroke="#111" stroke-width="1.4"/><text x="8.5" y="17.6" text-anchor="middle" font-family="Liberation Sans, sans-serif" font-weight="bold" font-size="9" fill="#111">$</text></svg><!--IC3E-->
<div class="a t" style="left:212px;top:752px;color:#3a8a0e">test</div>
<div class="a t" style="left:712px;top:658px">9.00 <span style="letter-spacing:-1px">USD</span></div>
<div class="a t" style="left:837px;top:658px">0</div>
<div class="a t" style="left:912px;top:658px">-</div>
<div class="a t blue" style="left:1037px;top:658px">获取建议费率</div>
<div class="a rin" style="top:658px">2.0</div>
<div class="a t" style="left:1280px;top:665px;color:#434343">%</div>
<div class="a t" style="left:1312px;top:658px">-</div>
<div class="a t" style="left:1425px;top:658px">-</div>
<!-- fixed right columns -->
<div class="a" style="left:1464px;top:381px;width:10px;height:401px;background:linear-gradient(to right,rgba(0,0,0,0),rgba(0,0,0,0.045))"></div>
<div class="a" style="left:1474px;top:381px;width:162px;height:46px;background:#eeeeee"></div>
<div class="a" style="left:1474px;top:427px;width:162px;height:355px;background:#fff"></div>
<div class="a" style="left:53px;top:783px;width:1583px;height:2px;background:#f7f7f7"></div>
<div class="a" style="left:1636px;top:427px;width:20px;height:358px;background:#fafafa;border-left:1px solid #f0f0f0"></div>
<div class="a vl" style="left:1561px;height:355px"></div>
<div class="a hl" style="top:537px;left:1474px;width:163px"></div>
<div class="a hl" style="top:650px;left:1474px;width:163px"></div>
<div class="a hl" style="top:782px;left:1474px;width:163px"></div>
<div class="a th" style="left:1482px;font-weight:500;color:#1f1f1f">状态</div>
<div class="a th" style="left:1569px;font-weight:500;color:#1f1f1f">动作</div>
<div class="a t" style="left:1482px;top:433px">待加入</div>
<div class="a t blue" style="left:1569px;top:433px">移除</div>
<svg class="a" style="left:1605px;top:439px" width="16" height="12" viewBox="0 0 16 12"><path d="M1 0V10.5H15.5" fill="none" stroke="#3f58c4" stroke-width="2"/><path d="M5.2 6V8M8 1.6V8M10.6 3.6V8M13.4 1V8" stroke="#3f58c4" stroke-width="1.5" fill="none"/></svg>
<div class="a t" style="left:1482px;top:544px">待加入</div>
<div class="a t blue" style="left:1569px;top:544px">移除</div>
<svg class="a" style="left:1605px;top:550px" width="16" height="12" viewBox="0 0 16 12"><path d="M1 0V10.5H15.5" fill="none" stroke="#3f58c4" stroke-width="2"/><path d="M5.2 6V8M8 1.6V8M10.6 3.6V8M13.4 1V8" stroke="#3f58c4" stroke-width="1.5" fill="none"/></svg>
<div class="a t" style="left:1482px;top:658px">待加入</div>
<div class="a t blue" style="left:1569px;top:658px">移除</div>
<svg class="a" style="left:1605px;top:664px" width="16" height="12" viewBox="0 0 16 12"><path d="M1 0V10.5H15.5" fill="none" stroke="#3f58c4" stroke-width="2"/><path d="M5.2 6V8M8 1.6V8M10.6 3.6V8M13.4 1V8" stroke="#3f58c4" stroke-width="1.5" fill="none"/></svg>
<svg class="a" style="left:1640px;top:433px" width="13" height="10" viewBox="0 0 13 10"><path d="M6.5 1.6L11.4 8.4H1.6Z" fill="#8c8c8c" stroke="#8c8c8c" stroke-width="2.2" stroke-linejoin="round"/></svg>
<svg class="a" style="left:1640px;top:768px" width="13" height="10" viewBox="0 0 13 10"><path d="M6.5 8.4L11.4 1.6H1.6Z" fill="#8c8c8c" stroke="#8c8c8c" stroke-width="2.2" stroke-linejoin="round"/></svg>


</body>
</html>
